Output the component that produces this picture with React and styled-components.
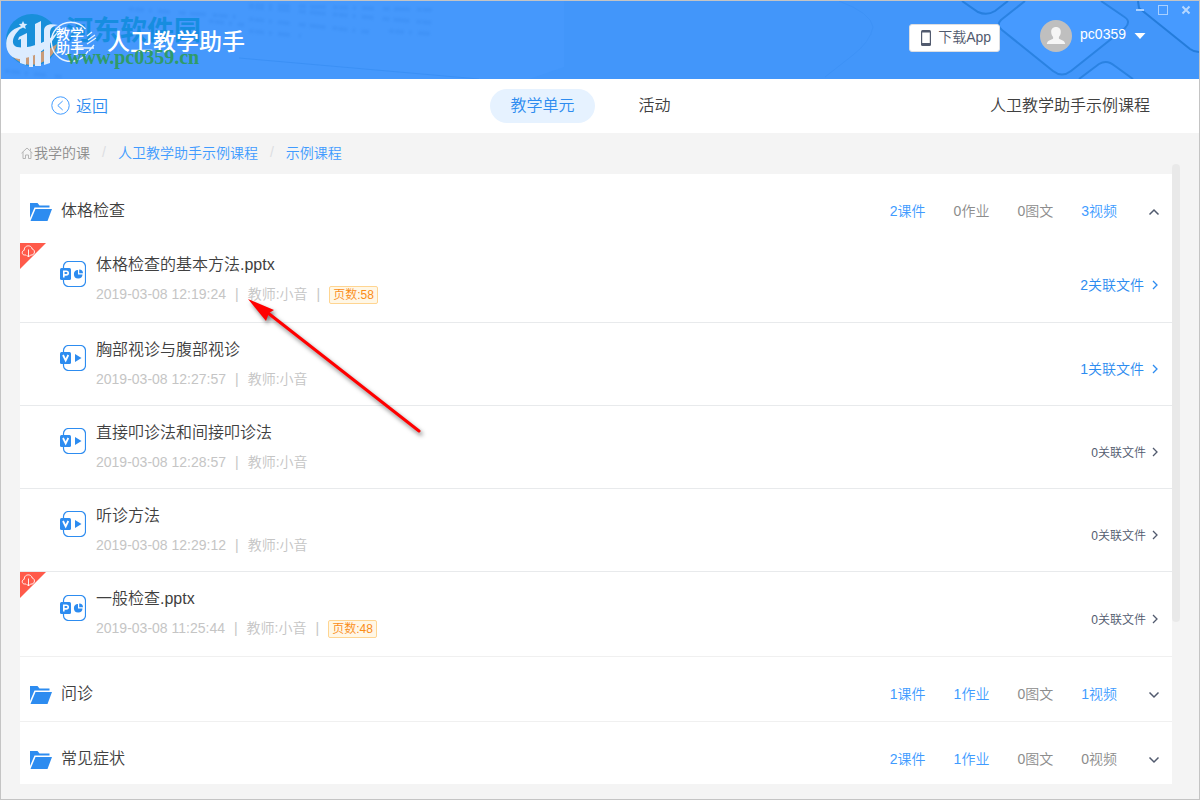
import { useState } from 'react';
import styled, { createGlobalStyle } from 'styled-components';

const blue = '#2d8cf0';
const lightBlue = '#409bff';
const headerBlue = '#4397fb';
const darkText = '#404040';
const slateText = '#515a6e';
const greyText = '#8c8c8c';
const paleText = '#c5c5c5';
const pageGrey = '#f4f4f4';
const ruleColor = '#e8eaec';

const chapters = [
    {
        title: '体格检查',
        counts: [[2, '课件'], [0, '作业'], [0, '图文'], [3, '视频']],
        open: true,
        files: [
            {name: '体格检查的基本方法.pptx', time: '2019-03-08 12:19:24', pages: 58, related: 2, type: 'P'},
            {name: '胸部视诊与腹部视诊', time: '2019-03-08 12:27:57', related: 1, type: 'V'},
            {name: '直接叩诊法和间接叩诊法', time: '2019-03-08 12:28:57', related: 0, type: 'V'},
            {name: '听诊方法', time: '2019-03-08 12:29:12', related: 0, type: 'V'},
            {name: '一般检查.pptx', time: '2019-03-08 11:25:44', pages: 48, related: 0, type: 'P'},
        ],
    },
    {title: '问诊', counts: [[1, '课件'], [1, '作业'], [0, '图文'], [1, '视频']], files: []},
    {title: '常见症状', counts: [[2, '课件'], [1, '作业'], [0, '图文'], [0, '视频']], files: []},
];

const App = () => {
    const [tab, setTab] = useState('unit');

    return (
        <Window>
            <GlobalStyle />
            <Header />
            <NavBar>
                <BackLink href='#back'><BackIcon />返回</BackLink>
                <Tabs>
                    <Tab active={tab === 'unit' ? 1 : 0} onClick={() => setTab('unit')}>教学单元</Tab>
                    <Tab active={tab === 'activity' ? 1 : 0} onClick={() => setTab('activity')}>活动</Tab>
                </Tabs>
                <CourseName>人卫教学助手示例课程</CourseName>
            </NavBar>
            <Breadcrumb>
                <HomeLink href='#home'><HomeIcon />我学的课</HomeLink>
                <Slash>/</Slash>
                <CrumbLink href='#course'>人卫教学助手示例课程</CrumbLink>
                <Slash>/</Slash>
                <CrumbLink href='#sample'>示例课程</CrumbLink>
            </Breadcrumb>
            <Content>
                <Panel>
                    {chapters.map((chapter) => <Chapter key={chapter.title} {...chapter} />)}
                </Panel>
                <ScrollThumb />
            </Content>
            <PointerArrow />
        </Window>
    );
};

const Header = () => (
    <HeaderBar>
        <HeaderPattern />
        <Brand>
            <SiteMark />
            <RoundLogo />
            <BrandName>人卫教学助手</BrandName>
            <SiteName>河东软件园</SiteName>
            <SiteUrl>www.pc0359.cn</SiteUrl>
        </Brand>
        <HeaderRight>
            <DownloadButton><PhoneIcon /><ButtonText>下载App</ButtonText></DownloadButton>
            <UserButton>
                <AvatarIcon />
                <ButtonText>pc0359</ButtonText>
                <svg width='12' height='6' viewBox='0 0 12 6'><path d='M0.500 0h11L6 6z' fill='#fff' /></svg>
            </UserButton>
        </HeaderRight>
        <WindowControls>
            <ControlButton aria-label='minimize'>
                <svg width='12' height='12' viewBox='0 0 12 12'><path d='M2 6h8' stroke='#a9d0ff' strokeWidth='2' /></svg>
            </ControlButton>
            <ControlButton aria-label='maximize'>
                <svg width='12' height='12' viewBox='0 0 12 12'><rect x='1.500' y='1.500' width='9' height='9' fill='none' stroke='#a9d0ff' /></svg>
            </ControlButton>
            <ControlButton aria-label='close'>
                <svg width='12' height='12' viewBox='0 0 12 12'><path d='M2.500 2.500l7 7M9.500 2.500l-7 7' stroke='#b5d7ff' strokeWidth='2' /></svg>
            </ControlButton>
        </WindowControls>
    </HeaderBar>
);

const Chapter = ({title, counts, files, open}) => {
    const [isOpen, setIsOpen] = useState(Boolean(open));

    return (
        <ChapterSection>
            <ChapterHead>
                <FolderIcon />
                <ChapterTitle>{title}</ChapterTitle>
                <Counts>
                    {counts.map(([count, label]) => (
                        <Count key={label} filled={count > 0 ? 1 : 0}>{count}{label}</Count>
                    ))}
                </Counts>
                <ToggleButton aria-label={title} aria-expanded={isOpen} onClick={() => setIsOpen(!isOpen)}>
                    <svg width='12' height='8' viewBox='0 0 12 8'>
                        <path d={isOpen ? 'M1.500 6.500L6 2l4.500 4.500' : 'M1.500 1.500L6 6l4.500-4.500'} fill='none' stroke={slateText} strokeWidth='1.500' />
                    </svg>
                </ToggleButton>
            </ChapterHead>
            {isOpen && <FileList>{files.map((file) => <FileItem key={file.name} {...file} />)}</FileList>}
        </ChapterSection>
    );
};

const FileItem = ({name, time, pages, related, type}) => (
    <FileRow>
        {type === 'P' && <DownloadCorner />}
        <FileIcon type={type} />
        <FileInfo>
            <FileName>{name}</FileName>
            <FileMeta tall={pages ? 1 : 0}>
                <span>{time}</span>
                <span>|</span>
                <span>教师:小音</span>
                {pages && <><span>|</span><PageTag>页数:{pages}</PageTag></>}
            </FileMeta>
        </FileInfo>
        <RelatedLink href='#related' filled={related > 0 ? 1 : 0}>
            {related}关联文件
            <svg width='6' height='12' viewBox='0 -2 6 12'><path d='M1 1l4 4-4 4' fill='none' stroke='currentColor' strokeWidth='1.300' /></svg>
        </RelatedLink>
    </FileRow>
);

const BackIcon = () => (
    <svg width='19' height='21' viewBox='0 -2 19 21' fill='none' stroke={lightBlue}>
        <circle cx='9.500' cy='9.500' r='8.700' />
        <path d='M11.700 5L6.800 9.500l4.900 4.500' />
    </svg>
);

const HomeIcon = () => (
    <svg width='12' height='14' viewBox='0 -2 12 14' fill='none' stroke='#b5b5b5'>
        <path d='M0.500 6.200L6 1l5.500 5.200M2 5v6.500h2.500V8h3v3.500H10V5M9.500 3.500v-2' />
    </svg>
);

const PhoneIcon = () => (
    <svg width='12' height='16' viewBox='0 0 12 16'>
        <rect x='1' width='10' height='16' rx='1.500' fill={slateText} />
        <path d='M2.200 2.500h7.600v10.500H2.200z' fill='#fff' />
    </svg>
);

const AvatarIcon = () => (
    <svg width='32' height='32' viewBox='0 0 32 32'>
        <circle cx='16' cy='16' r='16' fill='#bfbfbf' />
        <path d='M16 7c3.200 0 5 2.100 4.800 5.200-.1 2.300-.9 3.500-1.900 4.700v1.600c.6 1.200 6 1.500 6.300 5.500H6.800c.3-4 5.700-4.300 6.300-5.500v-1.600c-1-1.200-1.800-2.400-1.900-4.700C11 9.100 12.800 7 16 7z' fill='#f5f5f5' />
    </svg>
);

const FolderIcon = () => (
    <svg width='22' height='18' viewBox='0 0 22 18' fill={blue}>
        <path d='M0 0h7.500l2 2.500H19.500v2H4.500L0 15z' />
        <path d='M5.500 6H22L17.500 18H0.500z' />
    </svg>
);

const FileIcon = ({type}) => (
    <FileIconSvg width='26' height='26' viewBox='0 0 26 26'>
        <rect x='3.500' y='0.500' width='22' height='25' rx='5' fill='#fff' stroke={blue} strokeWidth='1.200' />
        <rect y='7' width='11' height='12' rx='1.500' fill={blue} />
        {type === 'P' ? <>
            <path d='M3.800 16.500v-6.300h2.400c2.700 0 2.700 3.700 0 3.700H4' fill='none' stroke='#fff' strokeWidth='1.600' />
            <path d='M18 9v4.500h4.500A4.300 4.300 0 1 1 18 9z' fill={blue} />
            <path d='M19.200 8.500a3.800 3.800 0 0 1 3.800 3.800h-3.800z' fill={blue} />
        </> : <>
            <path d='M3 10l2.700 5.500L8.300 10' fill='none' stroke='#fff' strokeWidth='1.800' />
            <path d='M15 9l6.500 4-6.500 4z' fill={blue} />
        </>}
    </FileIconSvg>
);

const DownloadCorner = () => (
    <Corner width='26' height='26' viewBox='0 0 26 26'>
        <path d='M0 0h26L0 26z' fill='#ff5a4a' />
        <path d='M6 12H4.700C1.500 12 1.500 7.800 4.200 7.300 4 1.800 11.500 1.500 12.200 6c3 .5 3 5.500-.2 6h-1.500M8.500 6.500v7.500M6.500 12l2 2 2-2' fill='none' stroke='#fff' strokeWidth='0.900' />
    </Corner>
);

const RoundLogo = () => (
    <RoundLogoSvg width='50' height='46' viewBox='0 0 50 46' fill='none' stroke='#e8f3ff'>
        <path d='M36.500 12A19.500 19.500 0 1 0 39 34' strokeWidth='1.500' />
        <path d='M26 31h19M38 27l9-6M39 23l7-5M40 34l5-6M38 19l5-4' strokeWidth='1.300' />
        <text x='7' y='22' fontSize='14' fontWeight='500' fill='#fff' stroke='none'>教学</text>
        <text x='7' y='36' fontSize='14' fontWeight='500' fill='#fff' stroke='none'>助手</text>
    </RoundLogoSvg>
);

const SiteMark = () => (
    <svg width='54' height='56' viewBox='0 0 54 56'>
        <circle cx='27' cy='28' r='26' fill='#188fda' />
        <path d='M8 45c12 1 29-3 44-13a26 26 0 0 1-44 13z' fill='#c99b79' />
        <path d='M1.500 28C3 21 9 15 19 14 7 22 5 33 12 35c9 2 31-3 42-17C46 34 32 46 14 47 4 46 0 37 1.500 28z' fill='#dcecff' />
        <path d='M14 25l8-4v21h-6V27l-3 1zM15 46h6v7l-6-2zM24 44h4v11h-4zM30 12l6-3v45h-6zM39 53V19c0-6 5-8 14-6-5 1-8 3-8 8v30z' fill='#dcecff' />
        <path d='M18 9l1.300 2.700 3 .3-2.200 2 .7 3-2.800-1.500-2.700 1.500.6-3-2.100-2 3-.3z' fill='#dcecff' />
    </svg>
);

const HeaderPattern = () => (
    <PatternSvg viewBox='0 0 1200 78' preserveAspectRatio='xMaxYMin slice' fill='none'>
        <path d='M0 0h1200v78H0z' fill='#4598fc' />
        <path d='M565 0h635v78H530l35-12z' fill='#4296fa' />
        <path d='M240 57l240 21' stroke='#3b90f5' />
        <FadedLines stroke='#3587ec' strokeWidth='4' opacity='0.300' strokeDasharray='5 1 9 5 3 6 12 9 7 4 16 7'>
            <path d='M250 4l184 5M250 6l184 16M250 18l120 13M390 30l44 3M250 30l52 5M130 8l110 8M210 20l35 4M6 70l60 6' />
        </FadedLines>
        <g strokeWidth='2'>
            <path d='M840 0q32 12 34 26-3 15-20 28l-28 22' stroke='#3d92f7' strokeWidth='1' />
            <path d='M963 0l16 11q9 4 17-1l13-10' stroke='#267fdf' />
            <path d='M1026 0l-24 19q-5 5 1 10l51 41q9 7 18 0l54-43q7-7-2-12l-22-15' fill='#469aff' stroke='#2a82e2' />
            <path d='M1080 78l20-15q8-5 16 2l18 13' fill='#469aff' stroke='#2a82e2' />
            <path d='M1139 0l1 7 51 41q4 3 9 3V0z' fill='#469aff' />
            <path d='M1139 0l1 7 51 41q4 3 9 3' stroke='#247cdb' />
        </g>
    </PatternSvg>
);

const PointerArrow = () => (
    <ArrowSvg width='184' height='142' viewBox='0 0 184 142' aria-hidden='true'>
        <path d='M24 18l151 118' stroke='#f00' strokeWidth='3' strokeLinecap='round' />
        <path d='M4 4l26 11-5 3-3 8z' fill='#f00' />
    </ArrowSvg>
);

const GlobalStyle = createGlobalStyle`
  * {
    box-sizing: border-box;
  }
  body {
    margin: 0;
    background: ${pageGrey};
    font-family: "Liberation Sans", "Noto Sans CJK SC", sans-serif;
    font-weight: 350;
    color: ${darkText};
  }
  button {
    padding: 0;
    border: none;
    background: none;
    font: inherit;
    color: inherit;
    cursor: pointer;
  }
  a {
    text-decoration: none;
  }
  svg {
    display: block;
    flex-shrink: 0;
  }
`;

const Window = styled.div`
  position: relative;
  display: flex;
  flex-direction: column;
  min-height: 100vh;
  border: 1px solid #c4c4c4;
  background: ${pageGrey};
`;

const HeaderBar = styled.header`
  position: relative;
  display: flex;
  justify-content: space-between;
  height: 78px;
  overflow: hidden;
  background: ${headerBlue};
  color: #fff;
`;

const PatternSvg = styled.svg`
  position: absolute;
  inset: 0;
  width: 100%;
  height: 100%;
`;

const FadedLines = styled.g`
  filter: blur(1px);
`;

const Brand = styled.div`
  position: relative;
  display: flex;
  align-items: center;
  padding-left: 4px;
`;

const RoundLogoSvg = styled.svg`
  position: relative;
  z-index: 1;
  margin-left: -10px;
`;

const BrandName = styled.h1`
  position: relative;
  z-index: 1;
  margin: 0 0 0 8px;
  padding-top: 4px;
  font-size: 23px;
  line-height: 32px;
  font-weight: 500;
`;

/* the site watermark lies over the brand */
const SiteName = styled.span`
  position: absolute;
  left: 65px;
  top: 12px;
  font-size: 27px;
  line-height: 36px;
  font-weight: 700;
  white-space: nowrap;
  color: #168de0;
`;

const SiteUrl = styled.span`
  position: absolute;
  z-index: 2;
  left: 66px;
  top: 46px;
  font-family: "Liberation Serif", serif;
  font-size: 20px;
  line-height: 20px;
  font-weight: 700;
  color: #2f9b69;
`;

const HeaderRight = styled.div`
  position: relative;
  display: flex;
  align-items: center;
  gap: 40px;
  padding: 0 53px 8px 0;
`;

const DownloadButton = styled.button`
  display: flex;
  align-items: center;
  gap: 6px;
  height: 28px;
  margin-top: 4px;
  && {
    padding: 0 8px 0 10px;
    border: 1px solid #dcdee2;
    border-radius: 3px;
    background: #fff;
    color: ${slateText};
    font-size: 14px;
  }
`;

const ButtonText = styled.span`
  padding-bottom: 4px;
`;

const UserButton = styled.button`
  display: flex;
  align-items: center;
  gap: 8px;
  && {
    font-size: 14px;
    font-weight: 500;
  }
`;

const WindowControls = styled.div`
  position: absolute;
  top: 3px;
  right: 7px;
  display: flex;
  gap: 11px;
`;

const ControlButton = styled.button`
  width: 12px;
  height: 12px;
`;

const NavBar = styled.nav`
  display: grid;
  grid-template-columns: 1fr auto 1fr;
  align-items: center;
  height: 54px;
  padding: 0 49px 0 50px;
  background: #fff;
  font-size: 16px;
`;

const BackLink = styled.a`
  display: flex;
  align-items: center;
  gap: 6px;
  padding-bottom: 3px;
  color: ${blue};
`;

const Tabs = styled.div`
  display: flex;
  gap: 24px;
  margin-right: 20px;
`;

const Tab = styled.button`
  height: 34px;
  && {
    padding: 0 20px 4px;
    border-radius: 17px;
    background: ${props => props.active === 1 ? '#e6f2ff' : 'transparent'};
    color: ${props => props.active === 1 ? blue : darkText};
  }
`;

const CourseName = styled.span`
  padding-bottom: 4px;
  text-align: right;
`;

const Breadcrumb = styled.nav`
  display: flex;
  align-items: center;
  height: 41px;
  padding: 0 20px 3px;
  font-size: 14px;
`;

const CrumbLink = styled.a`
  color: ${lightBlue};
`;

const HomeLink = styled(CrumbLink)`
  display: flex;
  align-items: center;
  gap: 1px;
  color: ${greyText};
`;

const Slash = styled.span`
  margin: 0 12px;
  color: #dcdee2;
`;

const Content = styled.main`
  position: relative;
  padding: 0 27px 15px 19px;
`;

const Panel = styled.div`
  background: #fff;
`;

const ScrollThumb = styled.div`
  position: absolute;
  top: -10px;
  right: 19px;
  width: 8px;
  height: 458px;
  border-radius: 4px;
  background: #e9e9e9;
`;

const ChapterSection = styled.section`
  & + & {
    border-top: 1px solid #f0f0f0;
  }
`;

const ChapterHead = styled.div`
  display: flex;
  align-items: center;
  height: 64px;
  padding: 11px 12px 0 10px;
  ${ChapterSection}:first-child & {
    height: 69px;
    padding-top: 6px;
  }
  ${ChapterSection}:last-child & {
    height: 62px;
    padding-top: 13px;
  }
`;

const ChapterTitle = styled.h2`
  flex: 1;
  margin: 0 0 0 9px;
  padding-bottom: 2px;
  font-size: 16px;
  line-height: 24px;
  font-weight: 350;
`;

const Counts = styled.div`
  display: flex;
  gap: 28px;
  margin-right: 31px;
  padding-bottom: 3px;
  font-size: 14px;
`;

const Count = styled.span`
  color: ${props => props.filled === 1 ? lightBlue : greyText};
`;

const ToggleButton = styled.button`
  width: 12px;
`;

const FileList = styled.div`
  display: flex;
  flex-direction: column;
`;

const FileRow = styled.article`
  position: relative;
  display: flex;
  align-items: center;
  padding: 15px 14px 15px 40px;
  &:first-child {
    padding-top: 10px;
  }
  & + & {
    border-top: 1px solid ${ruleColor};
  }
`;

const Corner = styled.svg`
  position: absolute;
  left: 0;
  top: 0;
`;

const FileIconSvg = styled.svg`
  margin-bottom: 12px;
`;

const FileInfo = styled.div`
  flex: 1;
  margin-left: 10px;
`;

const FileName = styled.h3`
  margin: 0 0 8px;
  font-size: 16px;
  line-height: 24px;
  font-weight: 350;
`;

const FileMeta = styled.div`
  display: flex;
  align-items: baseline;
  gap: 9px;
  height: ${props => props.tall === 1 ? '22px' : '20px'};
  font-size: 14px;
  line-height: 18px;
  color: ${paleText};
`;

const PageTag = styled.span`
  padding: 0 3px;
  border: 1px solid #ffd591;
  border-radius: 2px;
  background: #fff7e6;
  font-size: 12px;
  line-height: 16px;
  color: #fa8c16;
`;

const RelatedLink = styled.a`
  display: flex;
  align-items: center;
  gap: ${props => props.filled === 1 ? '8px' : '6px'};
  padding-top: 8px;
  font-size: ${props => props.filled === 1 ? '14px' : '12px'};
  color: ${props => props.filled === 1 ? blue : slateText};
`;

const ArrowSvg = styled.svg`
  position: absolute;
  left: 243px;
  top: 294px;
  pointer-events: none;
  filter: drop-shadow(2px 3px 2px rgba(0, 0, 0, 0.5));
`;

export default App;
